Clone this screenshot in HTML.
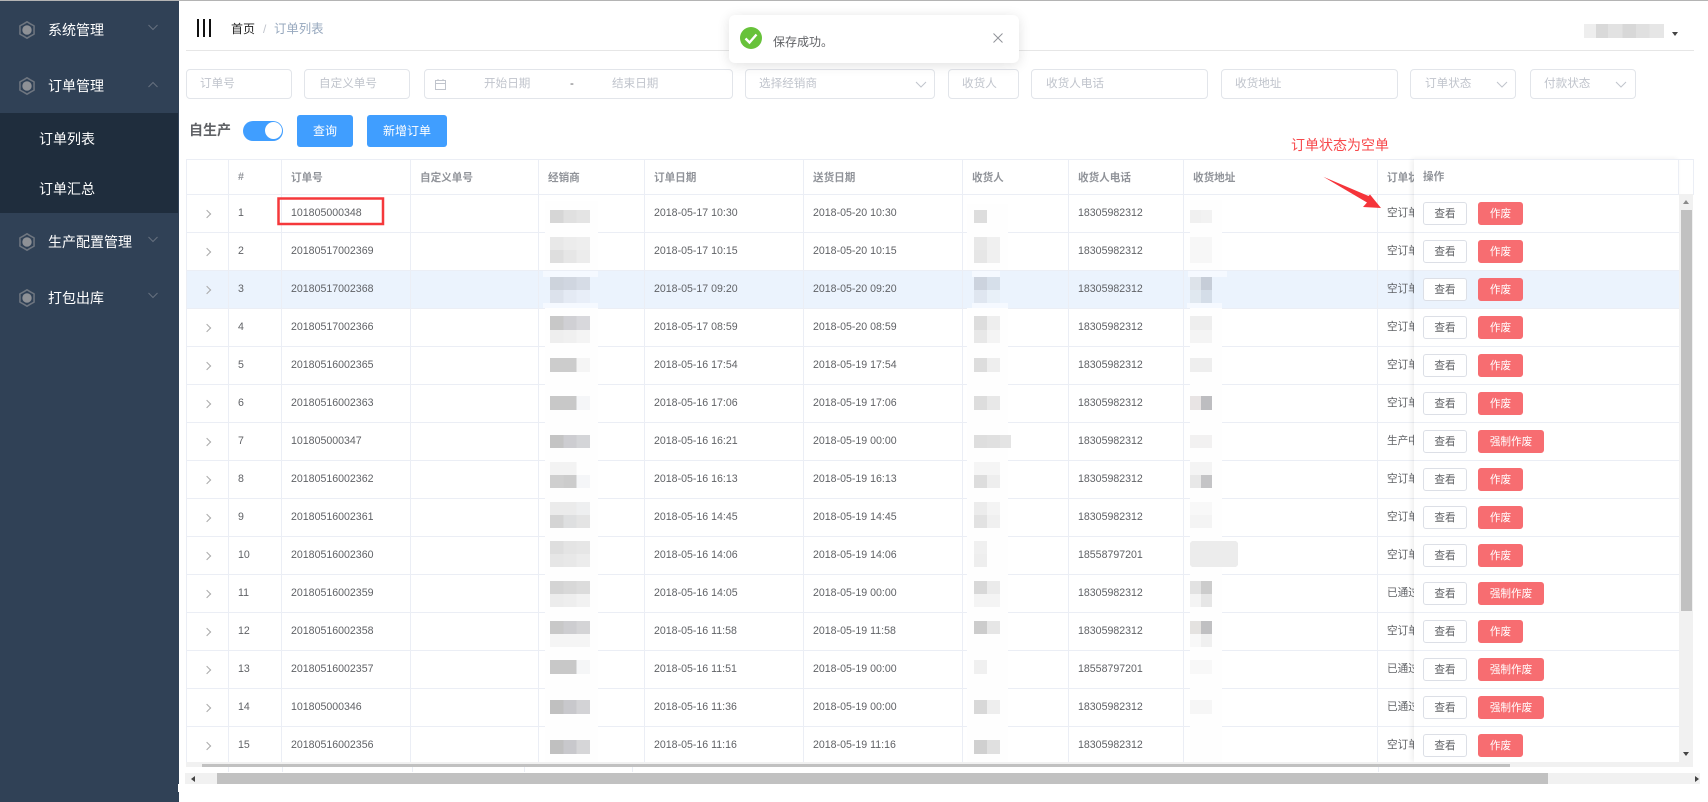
<!DOCTYPE html>
<html lang="zh"><head><meta charset="utf-8"><title>订单列表</title>
<style>
*{box-sizing:border-box}
html,body{margin:0;padding:0;width:1708px;height:802px;overflow:hidden;background:#fff;font-family:"Liberation Sans","Noto Sans CJK SC",sans-serif;color:#606266}
.a{position:absolute}
#top{left:0;top:0;width:1708px;height:1px;background:#b4b4b4;z-index:50}
#side{left:0;top:0;width:179px;height:802px;background:#304156}
#sub{left:0;top:113px;width:178px;height:100px;background:#1f2d3d}
.mi{left:48px;color:#fff;font-size:14px;line-height:20px;white-space:nowrap}
.sm{left:39px;color:#fff;font-size:14px;line-height:20px;white-space:nowrap}
#wrap{left:0;top:0;width:1708px;height:802px;filter:blur(.35px)}
.ip{height:30px;top:69px;border:1px solid #e2e5ea;border-radius:4px;background:#fff;color:#c0c4cc;font-size:11.6px;line-height:27px;white-space:nowrap}
.ip span{position:absolute;top:0}
.btn{top:115px;height:32px;background:#409eff;color:#fff;border-radius:3px;font-size:12px;line-height:32px;text-align:center}
table{border-collapse:separate;border-spacing:0;table-layout:fixed}
#tw{left:186px;top:159px;width:1228px;height:603px;overflow:hidden;border-left:1px solid #ebeef5}
#tb{width:1400px;font-size:10.6px;color:#606266}
#tb th{height:36px;border-top:1px solid #ebeef5;border-bottom:1px solid #ebeef5;border-right:1px solid #ebeef5;text-align:left;padding:0 0 0 9px;color:#909399;font-weight:700;white-space:nowrap;overflow:hidden}
#tb td{height:38px;border-bottom:1px solid #ebeef5;border-right:1px solid #ebeef5;padding:0 0 2px 9px;white-space:nowrap;overflow:hidden}
#tb tr.h td{background:#ebf3fd}
#fx{left:1414px;top:159px;width:265px;height:603px;background:#fff;overflow:hidden;box-shadow:-2px 0 5px rgba(0,0,0,.07);font-size:10.6px}
.fh{height:36px;border-top:1px solid #ebeef5;border-bottom:1px solid #ebeef5;border-right:1px solid #ebeef5;line-height:35px;padding-left:9px;color:#909399;font-weight:700}
.fr{height:38px;border-bottom:1px solid #ebeef5;padding-left:9px;padding-top:7px;display:flex}
.fr.h{background:#ebf3fd}
.v,.d{height:23px;line-height:22px;border-radius:3px;text-align:center;font-size:10.6px}
.v{width:44px;border:1px solid #dcdfe6;background:#fff;color:#606266;margin-right:11px}
.d{width:45px;background:#f76d71;border:1px solid #f76d71;color:#fff}
.d.l{width:66px}
.chev{width:6px;height:6px;border-top:1px solid #aaa;border-right:1px solid #aaa;transform:rotate(45deg);display:block;margin:2px 0 0 8px}
</style></head><body>
<div class="a" id="side">
<div class="a" id="sub"></div>
<svg class="a" style="left:0;top:0" width="179" height="320">
<defs><g id="gr"><circle r="4.700" fill="#8e9196"/><path d="M0-8.200L3.500-6.060 7.100-4.100 7 0 7.100 4.100 3.500 6.060 0 8.200-3.500 6.060-7.100 4.100-7 0-7.100-4.100-3.500-6.060z" fill="none" stroke="#6f7680" stroke-width="1.500" stroke-linejoin="round"/></g></defs>
<use href="#gr" x="27" y="30"/><use href="#gr" x="27" y="86"/><use href="#gr" x="27" y="242"/><use href="#gr" x="27" y="298"/>
<g fill="none" stroke="#66717f" stroke-width="1"><path d="M148.500 25l4.500 4.500 4.500-4.500"/><path d="M148.500 87l4.500-4.500 4.500 4.500"/><path d="M148.500 237l4.500 4.500 4.500-4.500"/><path d="M148.500 293l4.500 4.500 4.500-4.500"/></g>
</svg>
<div class="a mi" style="top:20px">系统管理</div>
<div class="a mi" style="top:76px">订单管理</div>
<div class="a sm" style="top:129px">订单列表</div>
<div class="a sm" style="top:179px">订单汇总</div>
<div class="a mi" style="top:232px">生产配置管理</div>
<div class="a mi" style="top:288px">打包出库</div>
</div>

<div class="a" id="wrap">
<div class="a" style="left:197px;top:19px;width:2px;height:18px;background:#111"></div>
<div class="a" style="left:203px;top:19px;width:2px;height:18px;background:#111"></div>
<div class="a" style="left:209px;top:19px;width:2px;height:18px;background:#111"></div>
<div class="a" style="left:231px;top:21px;font-size:12px;line-height:16px;color:#222">首页</div>
<div class="a" style="left:263px;top:21px;font-size:12px;line-height:16px;color:#c0c4cc">/</div>
<div class="a" style="left:274px;top:21px;font-size:12.4px;line-height:16px;color:#97a8be">订单列表</div>
<div class="a" style="left:186px;top:50px;width:1508px;height:1px;background:#e6e6e6"></div>
<div class="a" style="left:1584px;top:24px;width:80px;height:14px;background:linear-gradient(90deg,#eee 0 15%,#d9d9d9 15% 30%,#e2e2e2 30% 48%,#d8d8d8 48% 65%,#e0e0e0 65% 82%,#e6e6e6 82%)"></div>
<div class="a" style="left:1672px;top:32px;border-left:3.500px solid transparent;border-right:3.500px solid transparent;border-top:4px solid #444"></div>

<div class="a ip" style="left:186px;width:106px"><span style="left:13px">订单号</span></div>
<div class="a ip" style="left:304px;width:106px"><span style="left:14px">自定义单号</span></div>
<div class="a ip" style="left:424px;width:309px"><span style="left:59px">开始日期</span><span style="left:145px;color:#606266">-</span><span style="left:187px">结束日期</span>
<svg class="a" style="left:9px;top:8px" width="13" height="13"><path d="M1.500 2.500h10v9h-10zM1.500 5.500h10M4 1v2M9 1v2" fill="none" stroke="#c0c4cc"/></svg></div>
<div class="a ip" style="left:745px;width:190px"><span style="left:13px">选择经销商</span><svg class="a" style="left:169px;top:11px" width="12" height="8"><path d="M1 1l5 5 5-5" fill="none" stroke="#c0c4cc"/></svg></div>
<div class="a ip" style="left:948px;width:71px"><span style="left:13px">收货人</span></div>
<div class="a ip" style="left:1031px;width:177px"><span style="left:14px">收货人电话</span></div>
<div class="a ip" style="left:1221px;width:177px"><span style="left:13px">收货地址</span></div>
<div class="a ip" style="left:1410px;width:106px"><span style="left:14px">订单状态</span><svg class="a" style="left:85px;top:11px" width="12" height="8"><path d="M1 1l5 5 5-5" fill="none" stroke="#c0c4cc"/></svg></div>
<div class="a ip" style="left:1530px;width:106px"><span style="left:13px">付款状态</span><svg class="a" style="left:84px;top:11px" width="12" height="8"><path d="M1 1l5 5 5-5" fill="none" stroke="#c0c4cc"/></svg></div>

<div class="a" style="left:189px;top:120px;font-size:14px;line-height:20px;color:#606266;font-weight:700;white-space:nowrap">自生产</div>
<div class="a" style="left:243px;top:121px;width:40px;height:20px;border-radius:10px;background:#409eff"></div>
<div class="a" style="left:265px;top:122px;width:17px;height:17px;border-radius:50%;background:#fff"></div>
<div class="a btn" style="left:297px;width:56px">查询</div>
<div class="a btn" style="left:367px;width:80px">新增订单</div>

<div class="a" id="tw">
<table id="tb"><colgroup><col style="width:42px"><col style="width:53px"><col style="width:129px"><col style="width:128px"><col style="width:106px"><col style="width:159px"><col style="width:159px"><col style="width:106px"><col style="width:115px"><col style="width:194px"><col style="width:209px"></colgroup>
<tr><th></th><th>#</th><th>订单号</th><th>自定义单号</th><th>经销商</th><th>订单日期</th><th>送货日期</th><th>收货人</th><th>收货人电话</th><th>收货地址</th><th>订单状态</th></tr>
<tr><td><i class="chev"></i></td><td>1</td><td>101805000348</td><td></td><td></td><td>2018-05-17 10:30</td><td>2018-05-20 10:30</td><td></td><td>18305982312</td><td></td><td>空订单</td></tr>
<tr><td><i class="chev"></i></td><td>2</td><td>20180517002369</td><td></td><td></td><td>2018-05-17 10:15</td><td>2018-05-20 10:15</td><td></td><td>18305982312</td><td></td><td>空订单</td></tr>
<tr class="h"><td><i class="chev"></i></td><td>3</td><td>20180517002368</td><td></td><td></td><td>2018-05-17 09:20</td><td>2018-05-20 09:20</td><td></td><td>18305982312</td><td></td><td>空订单</td></tr>
<tr><td><i class="chev"></i></td><td>4</td><td>20180517002366</td><td></td><td></td><td>2018-05-17 08:59</td><td>2018-05-20 08:59</td><td></td><td>18305982312</td><td></td><td>空订单</td></tr>
<tr><td><i class="chev"></i></td><td>5</td><td>20180516002365</td><td></td><td></td><td>2018-05-16 17:54</td><td>2018-05-19 17:54</td><td></td><td>18305982312</td><td></td><td>空订单</td></tr>
<tr><td><i class="chev"></i></td><td>6</td><td>20180516002363</td><td></td><td></td><td>2018-05-16 17:06</td><td>2018-05-19 17:06</td><td></td><td>18305982312</td><td></td><td>空订单</td></tr>
<tr><td><i class="chev"></i></td><td>7</td><td>101805000347</td><td></td><td></td><td>2018-05-16 16:21</td><td>2018-05-19 00:00</td><td></td><td>18305982312</td><td></td><td>生产中</td></tr>
<tr><td><i class="chev"></i></td><td>8</td><td>20180516002362</td><td></td><td></td><td>2018-05-16 16:13</td><td>2018-05-19 16:13</td><td></td><td>18305982312</td><td></td><td>空订单</td></tr>
<tr><td><i class="chev"></i></td><td>9</td><td>20180516002361</td><td></td><td></td><td>2018-05-16 14:45</td><td>2018-05-19 14:45</td><td></td><td>18305982312</td><td></td><td>空订单</td></tr>
<tr><td><i class="chev"></i></td><td>10</td><td>20180516002360</td><td></td><td></td><td>2018-05-16 14:06</td><td>2018-05-19 14:06</td><td></td><td>18558797201</td><td></td><td>空订单</td></tr>
<tr><td><i class="chev"></i></td><td>11</td><td>20180516002359</td><td></td><td></td><td>2018-05-16 14:05</td><td>2018-05-19 00:00</td><td></td><td>18305982312</td><td></td><td>已通过</td></tr>
<tr><td><i class="chev"></i></td><td>12</td><td>20180516002358</td><td></td><td></td><td>2018-05-16 11:58</td><td>2018-05-19 11:58</td><td></td><td>18305982312</td><td></td><td>空订单</td></tr>
<tr><td><i class="chev"></i></td><td>13</td><td>20180516002357</td><td></td><td></td><td>2018-05-16 11:51</td><td>2018-05-19 00:00</td><td></td><td>18558797201</td><td></td><td>已通过</td></tr>
<tr><td><i class="chev"></i></td><td>14</td><td>101805000346</td><td></td><td></td><td>2018-05-16 11:36</td><td>2018-05-19 00:00</td><td></td><td>18305982312</td><td></td><td>已通过</td></tr>
<tr><td><i class="chev"></i></td><td>15</td><td>20180516002356</td><td></td><td></td><td>2018-05-16 11:16</td><td>2018-05-19 11:16</td><td></td><td>18305982312</td><td></td><td>空订单</td></tr>
</table></div>

<svg class="a" style="left:0;top:0" width="1414" height="770">
<g fill="#fefefe"><rect x="545" y="201" width="53" height="69"/><rect x="545" y="308" width="53" height="454"/><rect x="967" y="204" width="41" height="66"/><rect x="967" y="308" width="41" height="454"/><rect x="1190" y="200" width="32" height="70"/><rect x="1190" y="308" width="32" height="454"/></g>
<g fill="#f5f9ff"><rect x="543" y="271" width="55" height="6"/><rect x="543" y="303" width="55" height="5"/><rect x="972" y="271" width="28" height="6"/><rect x="972" y="303" width="36" height="5"/><rect x="1188" y="271" width="39" height="6"/><rect x="1187" y="303" width="35" height="5"/></g>
<g id="A" shape-rendering="crispEdges">
<rect x="550" y="210" width="13.300" height="13" fill="#d6d6d6"/><rect x="563.300" y="210" width="13.300" height="13" fill="#e0e0e0"/><rect x="576.600" y="210" width="13.400" height="13" fill="#e4e4e4"/>
<rect x="550" y="237" width="13.300" height="13" fill="#e8e8e8"/><rect x="563.300" y="237" width="13.300" height="13" fill="#ececec"/><rect x="576.600" y="237" width="13.400" height="13" fill="#eee"/>
<rect x="550" y="250" width="13.300" height="13" fill="#dedede"/><rect x="563.300" y="250" width="13.300" height="13" fill="#e6e6e6"/><rect x="576.600" y="250" width="13.400" height="13" fill="#ececec"/>
<rect x="550" y="277" width="13.300" height="13" fill="#cdd3dc"/><rect x="563.300" y="277" width="13.300" height="13" fill="#d0d6e0"/><rect x="576.600" y="277" width="13.400" height="13" fill="#d6dce6"/>
<rect x="550" y="290" width="13.300" height="13" fill="#dce2ec"/><rect x="563.300" y="290" width="13.300" height="13" fill="#e4eaf4"/><rect x="576.600" y="290" width="13.400" height="13" fill="#e8eef8"/>
<rect x="550" y="316" width="13.300" height="14" fill="#c8c8c8"/><rect x="563.300" y="316" width="13.300" height="14" fill="#d0d0d4"/><rect x="576.600" y="316" width="13.400" height="14" fill="#d8d8dc"/>
<rect x="550" y="330" width="13.300" height="13" fill="#eee"/><rect x="563.300" y="330" width="13.300" height="13" fill="#f0f0f0"/><rect x="576.600" y="330" width="13.400" height="13" fill="#f4f4f4"/>
<rect x="550" y="358" width="26.600" height="14" fill="#ccc"/><rect x="576.600" y="358" width="13.400" height="14" fill="#f5f5f5"/>
<rect x="550" y="396" width="26.600" height="14" fill="#c8c8c8"/><rect x="576.600" y="396" width="13.400" height="14" fill="#f5f6f8"/>
<rect x="550" y="435" width="13.300" height="13" fill="#c4c4c4"/><rect x="563.300" y="435" width="13.300" height="13" fill="#cdcdd1"/><rect x="576.600" y="435" width="13.400" height="13" fill="#d4d5d8"/>
<rect x="550" y="462" width="26.600" height="13" fill="#f3f3f3"/>
<rect x="550" y="475" width="13.300" height="13" fill="#cfcfcf"/><rect x="563.300" y="475" width="13.300" height="13" fill="#ccc"/><rect x="576.600" y="475" width="13.400" height="13" fill="#f5f6f8"/>
<rect x="550" y="502" width="26.600" height="13" fill="#ebebeb"/><rect x="576.600" y="502" width="13.400" height="13" fill="#eeeff0"/>
<rect x="550" y="515" width="13.300" height="13" fill="#d4d4d4"/><rect x="563.300" y="515" width="13.300" height="13" fill="#dedfe0"/><rect x="576.600" y="515" width="13.400" height="13" fill="#e4e4e4"/>
<rect x="550" y="541" width="13.300" height="13" fill="#dedede"/><rect x="563.300" y="541" width="13.300" height="13" fill="#e4e4e4"/><rect x="576.600" y="541" width="13.400" height="13" fill="#e6e6e6"/>
<rect x="550" y="554" width="13.300" height="13" fill="#e6e6e6"/><rect x="563.300" y="554" width="13.300" height="13" fill="#e8e8e8"/><rect x="576.600" y="554" width="13.400" height="13" fill="#ececec"/>
<rect x="550" y="581" width="13.300" height="13" fill="#d4d4d4"/><rect x="563.300" y="581" width="13.300" height="13" fill="#d8d8d8"/><rect x="576.600" y="581" width="13.400" height="13" fill="#dcdcdc"/>
<rect x="550" y="594" width="13.300" height="13" fill="#ececec"/><rect x="563.300" y="594" width="13.300" height="13" fill="#eee"/><rect x="576.600" y="594" width="13.400" height="13" fill="#f2f2f2"/>
<rect x="550" y="621" width="13.300" height="13" fill="#c8c8c8"/><rect x="563.300" y="621" width="13.300" height="13" fill="#cdcdd0"/><rect x="576.600" y="621" width="13.400" height="13" fill="#d4d4d6"/>
<rect x="550" y="634" width="40" height="13" fill="#f5f5f5"/>
<rect x="550" y="660" width="26.600" height="14" fill="#c8c8c8"/><rect x="576.600" y="660" width="13.400" height="14" fill="#f5f6f7"/>
<rect x="550" y="700" width="13.300" height="14" fill="#c0c0c0"/><rect x="563.300" y="700" width="13.300" height="14" fill="#c8c8cc"/><rect x="576.600" y="700" width="13.400" height="14" fill="#d3d3d6"/>
<rect x="550" y="740" width="13.300" height="14" fill="#c0c0c0"/><rect x="563.300" y="740" width="13.300" height="14" fill="#c8c8cc"/><rect x="576.600" y="740" width="13.400" height="14" fill="#d6d6d8"/>
</g>
<g id="B" shape-rendering="crispEdges">
<rect x="974" y="210" width="13" height="13" fill="#ddd"/>
<rect x="974" y="237" width="13" height="13" fill="#e8e8e8"/><rect x="987" y="237" width="13" height="13" fill="#f0f0f0"/>
<rect x="974" y="250" width="13" height="13" fill="#e6e6e6"/><rect x="987" y="250" width="13" height="13" fill="#f0f0f0"/>
<rect x="974" y="277" width="13" height="13" fill="#ccd3de"/><rect x="987" y="277" width="13" height="13" fill="#d6dfea"/>
<rect x="974" y="290" width="13" height="13" fill="#dfe6f0"/><rect x="987" y="290" width="13" height="13" fill="#e8f0f8"/>
<rect x="974" y="316" width="13" height="14" fill="#ddd"/><rect x="987" y="316" width="13" height="14" fill="#eee"/>
<rect x="974" y="330" width="13" height="13" fill="#e8e8e8"/><rect x="987" y="330" width="13" height="13" fill="#f4f4f4"/>
<rect x="974" y="358" width="13" height="14" fill="#ddd"/><rect x="987" y="358" width="13" height="14" fill="#eee"/>
<rect x="974" y="396" width="13" height="14" fill="#ddd"/><rect x="987" y="396" width="13" height="14" fill="#e8e8e8"/>
<rect x="974" y="435" width="13" height="13" fill="#dedede"/><rect x="987" y="435" width="13" height="13" fill="#e0e0e0"/><rect x="1000" y="435" width="11" height="13" fill="#e4e4e4"/>
<rect x="974" y="462" width="26" height="13" fill="#f5f5f5"/>
<rect x="974" y="475" width="13" height="13" fill="#ddd"/><rect x="987" y="475" width="13" height="13" fill="#eee"/>
<rect x="974" y="502" width="13" height="13" fill="#ececec"/><rect x="987" y="502" width="13" height="13" fill="#f4f4f4"/>
<rect x="974" y="515" width="13" height="13" fill="#e2e2e2"/><rect x="987" y="515" width="13" height="13" fill="#f0f0f0"/>
<rect x="974" y="541" width="13" height="13" fill="#f0f0f0"/><rect x="974" y="554" width="13" height="13" fill="#eee"/>
<rect x="974" y="581" width="13" height="13" fill="#d8d8d8"/><rect x="987" y="581" width="13" height="13" fill="#ebebeb"/>
<rect x="974" y="594" width="26" height="13" fill="#f4f4f4"/>
<rect x="974" y="621" width="13" height="13" fill="#ccc"/><rect x="987" y="621" width="13" height="13" fill="#e6e6e6"/>
<rect x="974" y="660" width="13" height="14" fill="#f0f0f0"/>
<rect x="974" y="700" width="13" height="14" fill="#d8d8d8"/><rect x="987" y="700" width="13" height="14" fill="#eee"/>
<rect x="974" y="740" width="13" height="14" fill="#d0d0d0"/><rect x="987" y="740" width="13" height="14" fill="#e0e0e0"/>
</g>
<g id="C" shape-rendering="crispEdges">
<rect x="1190" y="210" width="11" height="13" fill="#f0f0f0"/><rect x="1201" y="210" width="11" height="13" fill="#f2f2f2"/>
<rect x="1190" y="237" width="22" height="26" fill="#f7f7f7"/>
<rect x="1190" y="277" width="11" height="13" fill="#dde3ea"/><rect x="1201" y="277" width="11" height="13" fill="#c6cdd8"/>
<rect x="1190" y="290" width="11" height="13" fill="#e0e8f0"/><rect x="1201" y="290" width="11" height="13" fill="#d4dde8"/>
<rect x="1190" y="316" width="22" height="14" fill="#eee"/><rect x="1190" y="330" width="22" height="13" fill="#f4f4f4"/>
<rect x="1190" y="358" width="22" height="14" fill="#eee"/>
<rect x="1190" y="396" width="11" height="14" fill="#e8e4e4"/><rect x="1201" y="396" width="11" height="14" fill="#bdbdc0"/>
<rect x="1190" y="435" width="22" height="13" fill="#f2f1f1"/>
<rect x="1190" y="462" width="22" height="13" fill="#f4f4f4"/>
<rect x="1190" y="475" width="11" height="13" fill="#e8e8e8"/><rect x="1201" y="475" width="11" height="13" fill="#c4c4c6"/>
<rect x="1190" y="502" width="22" height="13" fill="#f8f8f8"/><rect x="1190" y="515" width="22" height="13" fill="#f4f4f4"/>
<rect x="1190" y="541" width="48" height="26" rx="3" fill="#ececec"/>
<rect x="1190" y="581" width="11" height="13" fill="#e2e2e2"/><rect x="1201" y="581" width="11" height="13" fill="#ccc"/>
<rect x="1190" y="594" width="11" height="13" fill="#f4f4f4"/><rect x="1201" y="594" width="11" height="13" fill="#e6e6e6"/>
<rect x="1190" y="621" width="11" height="13" fill="#e4e2e0"/><rect x="1201" y="621" width="11" height="13" fill="#c0c0c2"/>
<rect x="1190" y="634" width="11" height="13" fill="#f8f8f8"/><rect x="1201" y="634" width="11" height="13" fill="#f0f0f0"/>
<rect x="1190" y="660" width="22" height="14" fill="#f8f8f8"/><rect x="1190" y="700" width="22" height="14" fill="#f6f6f6"/>
</g>
<rect x="278.500" y="198.500" width="104.500" height="25.500" fill="none" stroke="#f5383b" stroke-width="2.500"/>
</svg>

<div class="a" id="fx">
<div class="fh">操作</div>
<div class="fr"><div class="v">查看</div><div class="d">作废</div></div>
<div class="fr"><div class="v">查看</div><div class="d">作废</div></div>
<div class="fr h"><div class="v">查看</div><div class="d">作废</div></div>
<div class="fr"><div class="v">查看</div><div class="d">作废</div></div>
<div class="fr"><div class="v">查看</div><div class="d">作废</div></div>
<div class="fr"><div class="v">查看</div><div class="d">作废</div></div>
<div class="fr"><div class="v">查看</div><div class="d l">强制作废</div></div>
<div class="fr"><div class="v">查看</div><div class="d">作废</div></div>
<div class="fr"><div class="v">查看</div><div class="d">作废</div></div>
<div class="fr"><div class="v">查看</div><div class="d">作废</div></div>
<div class="fr"><div class="v">查看</div><div class="d l">强制作废</div></div>
<div class="fr"><div class="v">查看</div><div class="d">作废</div></div>
<div class="fr"><div class="v">查看</div><div class="d l">强制作废</div></div>
<div class="fr"><div class="v">查看</div><div class="d l">强制作废</div></div>
<div class="fr"><div class="v">查看</div><div class="d">作废</div></div>
</div>

<div class="a" style="left:1678px;top:159px;width:16px;height:36px;border:1px solid #ebeef5"></div>
<div class="a" style="left:1679px;top:194px;width:14px;height:573px;background:#f1f1f1"></div>
<div class="a" style="left:1681px;top:210px;width:11px;height:401px;background:#c1c1c1"></div>
<div class="a" style="left:1683px;top:200px;border-left:3.500px solid transparent;border-right:3.500px solid transparent;border-bottom:4px solid #8a8a8a"></div>
<div class="a" style="left:1683px;top:752px;border-left:3.500px solid transparent;border-right:3.500px solid transparent;border-top:4px solid #444"></div>

<div class="a" style="left:186px;top:762px;width:1493px;height:5px;background:#f1f1f1"></div>
<div class="a" style="left:202px;top:764px;width:1308px;height:3px;background:#c1c1c1"></div>
<div class="a" style="left:186px;top:767px;width:1507px;height:6px;background:#fff"></div>
<div class="a" style="left:228px;top:767px;width:1px;height:5px;background:#ebeef5"></div>
<div class="a" style="left:282px;top:767px;width:1px;height:5px;background:#ebeef5"></div>
<div class="a" style="left:412px;top:767px;width:1px;height:5px;background:#ebeef5"></div>
<div class="a" style="left:524px;top:767px;width:1px;height:5px;background:#ebeef5"></div>
<div class="a" style="left:632px;top:767px;width:1px;height:5px;background:#ebeef5"></div>
<div class="a" style="left:1378px;top:767px;width:1px;height:5px;background:#ebeef5"></div>
<div class="a" style="left:185px;top:773px;width:1515px;height:11px;background:#f1f1f1"></div>
<div class="a" style="left:217px;top:773px;width:1331px;height:11px;background:#c1c1c1"></div>
<div class="a" style="left:191px;top:776px;border-top:3.500px solid transparent;border-bottom:3.500px solid transparent;border-right:4px solid #444"></div>
<div class="a" style="left:1695px;top:776px;border-top:3.500px solid transparent;border-bottom:3.500px solid transparent;border-left:4px solid #444"></div>
<div class="a" style="left:178px;top:784px;width:6px;height:8px;background:#fff"></div>
</div>

<div class="a" style="left:1291px;top:135px;font-size:14px;line-height:20px;color:#f7484b;white-space:nowrap;filter:blur(.3px)">订单状态为空单</div>
<svg class="a" style="left:1315px;top:170px" width="72" height="44"><path d="M8.300 6.700L53.500 26 55 24.500 66 38 48 37 52 32.500z" fill="#f5343a"/></svg>

<div class="a" style="left:729px;top:15px;width:290px;height:48px;background:#fff;border-radius:6px;box-shadow:0 2px 12px rgba(0,0,0,.12)">
<svg class="a" style="left:11px;top:12px" width="22" height="22"><circle cx="11" cy="11" r="11" fill="#67c23a"/><path d="M5.500 11.500l4 4 7-8" fill="none" stroke="#fff" stroke-width="2.400"/></svg>
<div class="a" style="left:44px;top:18px;font-size:12px;line-height:18px;color:#606266;white-space:nowrap">保存成功。</div>
<svg class="a" style="left:264px;top:18px" width="10" height="10"><path d="M.5.500l9 9M9.500.500l-9 9" stroke="#909399" fill="none"/></svg>
</div>
<div class="a" id="top"></div>
</body></html>
